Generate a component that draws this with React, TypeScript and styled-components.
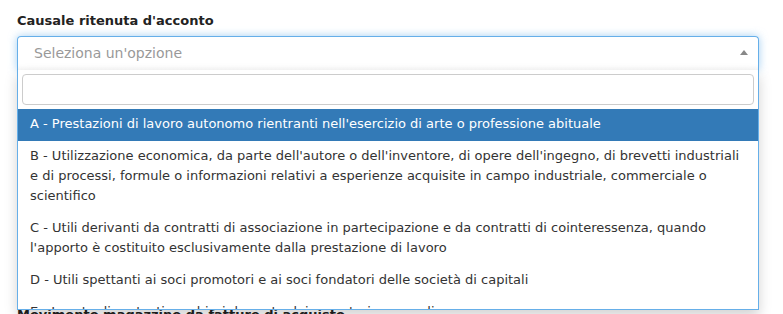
import React from 'react';
import styled, { createGlobalStyle } from 'styled-components';

const GlobalStyle = createGlobalStyle`
  html, body {
    margin: 0;
    padding: 0;
    background: #fff;
  }
  body {
    font-family: "DejaVu Sans", Verdana, sans-serif;
    font-size: 13px;
    color: #333;
  }
`;

const OPTIONS = [
  "A - Prestazioni di lavoro autonomo rientranti nell'esercizio di arte o professione abituale",
  "B - Utilizzazione economica, da parte dell'autore o dell'inventore, di opere dell'ingegno, di brevetti industriali e di processi, formule o informazioni relativi a esperienze acquisite in campo industriale, commerciale o scientifico",
  "C - Utili derivanti da contratti di associazione in partecipazione e da contratti di cointeressenza, quando l'apporto è costituito esclusivamente dalla prestazione di lavoro",
  "D - Utili spettanti ai soci promotori e ai soci fondatori delle società di capitali",
  "E - Levata di protesti cambiari da parte dei segretari comunali",
  "F - Indennità corrisposte ai giudici onorari di pace e ai vice procuratori onorari",
];

const App: React.FC = () => {
  return (
    <>
      <GlobalStyle />
      <Page>
        <FormGroup>
          <Label>Causale ritenuta d'acconto</Label>
          <SelectWrapper>
            <Selection>
              <Placeholder>Seleziona un'opzione</Placeholder>
              <Arrow />
            </Selection>
            <Dropdown>
              <SearchWrapper>
                <SearchInput type="text" />
              </SearchWrapper>
              <Results>
                {OPTIONS.map((option, i) => (
                  <Option key={option} highlighted={i === 0}>
                    {option}
                  </Option>
                ))}
              </Results>
            </Dropdown>
          </SelectWrapper>
        </FormGroup>
        <FormGroup spaced>
          <Label>Note</Label>
          <TextArea />
        </FormGroup>
        <FormGroup>
          <Label>Movimento magazzino da fatture di acquisto</Label>
        </FormGroup>
      </Page>
    </>
  );
};

export default App;

const Page = styled.div`
  min-height: 400px;
  padding: 11px 24px 0 17px;
`;

const FormGroup = styled.div<{ spaced?: boolean }>`
  display: flex;
  flex-direction: column;
  gap: 5px;
  margin: ${({ spaced }) => (spaced ? '15px 0' : '0')};
`;

const Label = styled.label`
  display: block;
  font-weight: bold;
  font-size: 13px;
  line-height: 20px;
  color: #222;
`;

const SelectWrapper = styled.div`
  position: relative;
`;

const Selection = styled.div`
  display: flex;
  align-items: center;
  justify-content: space-between;
  height: 33px;
  padding: 0 10px 0 16px;
  border: 1px solid #66afe9;
  border-bottom: none;
  border-radius: 4px 4px 0 0;
  background: linear-gradient(to bottom, #fff 85%, #f8f8f8 100%);
  box-shadow: 0 0 8px rgba(102, 175, 233, 0.6);
`;

const Placeholder = styled.span`
  color: #999;
  font-size: 14px;
  line-height: 20px;
  margin-top: -2px;
`;

const Arrow = styled.b`
  width: 0;
  height: 0;
  margin-top: -2px;
  border-style: solid;
  border-width: 0 4px 5px 4px;
  border-color: transparent transparent #888 transparent;
`;

const Dropdown = styled.div`
  position: absolute;
  top: 100%;
  left: 0;
  right: 0;
  z-index: 10;
  background: #fff;
  border: 1px solid #66afe9;
  border-top: none;
  box-shadow: 0 6px 12px rgba(0, 0, 0, 0.175);
`;

const SearchWrapper = styled.div`
  padding: 4px;
  background: #fff;
`;

const SearchInput = styled.input`
  display: block;
  box-sizing: border-box;
  width: 100%;
  height: 31px;
  border: 1px solid #ccc;
  border-radius: 4px;
  outline: none;
  font-family: inherit;
  font-size: 13px;
`;

const Results = styled.ul`
  list-style: none;
  margin: 0;
  padding: 0;
  max-height: 200px;
  overflow: hidden;
`;

const Option = styled.li<{ highlighted: boolean }>`
  padding: 5px 12px 7px;
  font-size: 13px;
  line-height: 20px;
  color: ${({ highlighted }) => (highlighted ? '#fff' : '#333')};
  background: ${({ highlighted }) => (highlighted ? '#337ab7' : '#fff')};
`;

const TextArea = styled.textarea`
  box-sizing: border-box;
  width: 100%;
  height: 180px;
  border: 1px solid #ccc;
  border-radius: 4px;
  resize: none;
`;
